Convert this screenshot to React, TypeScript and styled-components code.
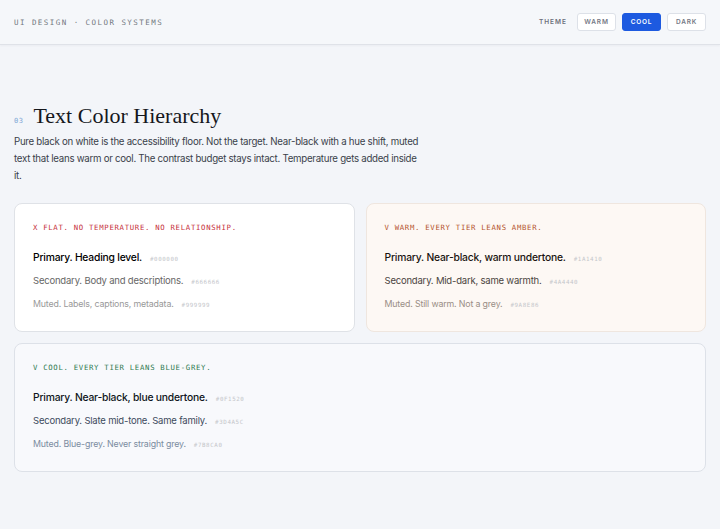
import React from "react";
import styled, { createGlobalStyle } from "styled-components";

const GlobalStyle = createGlobalStyle`
  html, body {
    margin: 0;
    padding: 0;
    background: #f3f5f9;
  }
  body {
    font-family: Inter, "Noto Sans", sans-serif;
    -webkit-font-smoothing: antialiased;
  }
`;

const Page = styled.div`
  min-height: 529px;
  background: #f3f5f9;
`;

const Header = styled.header`
  height: 45px;
  box-sizing: border-box;
  padding: 0 14px;
  display: flex;
  align-items: center;
  justify-content: space-between;
  background: #f5f7fa;
  border-bottom: 1px solid #dfe2e8;
  box-shadow: 0 1px 2px rgba(20, 30, 50, 0.04);
`;

const Crumb = styled.div`
  font-family: "DejaVu Sans Mono", "Liberation Mono", monospace;
  font-size: 7.5px;
  letter-spacing: 1.45px;
  color: #73777f;
  text-transform: uppercase;
`;

const ThemeSwitch = styled.div`
  display: flex;
  align-items: center;
  gap: 6px;
`;

const ThemeLabel = styled.span`
  font-family: Inter, sans-serif;
  font-size: 6.5px;
  font-weight: 600;
  letter-spacing: 1px;
  color: #6c707a;
  margin-right: 4px;
`;

const ThemeButton = styled.button<{ $active?: boolean }>`
  width: 39px;
  height: 18px;
  padding: 0;
  border-radius: 3px;
  border: 1px solid ${(p) => (p.$active ? "#1d5ae0" : "#dde1e8")};
  background: ${(p) => (p.$active ? "#1d5ae0" : "#ffffff")};
  color: ${(p) => (p.$active ? "#ffffff" : "#747884")};
  font-family: Inter, sans-serif;
  font-size: 6.5px;
  font-weight: 600;
  letter-spacing: 0.8px;
  cursor: pointer;
`;

const Main = styled.main`
  padding: 57px 14px 40px;
`;

const TitleRow = styled.div`
  display: flex;
  align-items: baseline;
  gap: 10px;
`;

const SectionNum = styled.span`
  font-family: "DejaVu Sans Mono", monospace;
  font-size: 7px;
  letter-spacing: 0.5px;
  color: #7fa7d6;
`;

const Title = styled.h1`
  margin: 0;
  font-family: "Liberation Serif", "DejaVu Serif", serif;
  font-weight: 400;
  font-size: 22px;
  line-height: 28px;
  color: #15171c;
`;

const Lead = styled.p`
  margin: 3px 0 0;
  width: 408px;
  font-size: 9.7px;
  letter-spacing: -0.28px;
  line-height: 17px;
  color: #3a3f4a;
`;

const Grid = styled.div`
  margin-top: 19px;
  display: grid;
  grid-template-columns: 1fr 1fr;
  gap: 11px 11px;
`;

type Tone = "flat" | "warm" | "cool";

const tones = {
  flat: { bg: "#ffffff", border: "#dfe2e7", label: "#c62f3b" },
  warm: { bg: "#fdf8f4", border: "#efe6df", label: "#b4532c" },
  cool: { bg: "#f8f9fc", border: "#dde1e8", label: "#2f7a50" },
};

const Card = styled.div<{ $tone: Tone; $wide?: boolean }>`
  grid-column: ${(p) => (p.$wide ? "1 / span 2" : "auto")};
  height: 129px;
  box-sizing: border-box;
  padding: 19px 18px 0;
  border-radius: 8px;
  background: ${(p) => tones[p.$tone].bg};
  border: 1px solid ${(p) => tones[p.$tone].border};
  display: flex;
  flex-direction: column;
`;

const CardLabel = styled.div<{ $tone: Tone }>`
  font-family: "DejaVu Sans Mono", "Liberation Mono", monospace;
  font-size: 7.3px;
  line-height: 10px;
  letter-spacing: 0.7px;
  text-transform: uppercase;
  color: ${(p) => tones[p.$tone].label};
  margin-bottom: 17px;
`;

const Rows = styled.div`
  display: flex;
  flex-direction: column;
  gap: 9.5px;
`;

const Row = styled.div`
  display: flex;
  align-items: baseline;
  gap: 8px;
  height: 14px;
  line-height: 14px;
`;

const levels = [
  { size: 10.3, weight: 500, spacing: -0.2 },
  { size: 9.5, weight: 400, spacing: -0.2 },
  { size: 8.8, weight: 400, spacing: -0.15 },
];

const Sample = styled.span<{ $level: number; $color: string }>`
  color: ${(p) => p.$color};
  font-size: ${(p) => levels[p.$level].size}px;
  font-weight: ${(p) => levels[p.$level].weight};
  letter-spacing: ${(p) => levels[p.$level].spacing}px;
`;

const Hex = styled.span`
  font-family: "DejaVu Sans Mono", monospace;
  font-size: 5.8px;
  letter-spacing: 0.6px;
  color: #c4c6ca;
`;

type Line = { text: string; hex: string };

const cards: { tone: Tone; label: string; wide?: boolean; lines: Line[] }[] = [
  {
    tone: "flat",
    label: "X Flat. No temperature. No relationship.",
    lines: [
      { text: "Primary. Heading level.", hex: "#000000" },
      { text: "Secondary. Body and descriptions.", hex: "#666666" },
      { text: "Muted. Labels, captions, metadata.", hex: "#999999" },
    ],
  },
  {
    tone: "warm",
    label: "V Warm. Every tier leans amber.",
    lines: [
      { text: "Primary. Near-black, warm undertone.", hex: "#1A1410" },
      { text: "Secondary. Mid-dark, same warmth.", hex: "#4A4440" },
      { text: "Muted. Still warm. Not a grey.", hex: "#9A8E86" },
    ],
  },
  {
    tone: "cool",
    wide: true,
    label: "V Cool. Every tier leans blue-grey.",
    lines: [
      { text: "Primary. Near-black, blue undertone.", hex: "#0F1520" },
      { text: "Secondary. Slate mid-tone. Same family.", hex: "#3D4A5C" },
      { text: "Muted. Blue-grey. Never straight grey.", hex: "#7B8CA0" },
    ],
  },
];

export default function App() {
  return (
    <Page>
      <GlobalStyle />
      <Header>
        <Crumb>UI Design · Color Systems</Crumb>
        <ThemeSwitch>
          <ThemeLabel>THEME</ThemeLabel>
          <ThemeButton>WARM</ThemeButton>
          <ThemeButton $active>COOL</ThemeButton>
          <ThemeButton>DARK</ThemeButton>
        </ThemeSwitch>
      </Header>
      <Main>
        <TitleRow>
          <SectionNum>03</SectionNum>
          <Title>Text Color Hierarchy</Title>
        </TitleRow>
        <Lead>
          Pure black on white is the accessibility floor. Not the target. Near-black with a hue
          shift, muted text that leans warm or cool. The contrast budget stays intact. Temperature
          gets added inside it.
        </Lead>
        <Grid>
          {cards.map((c) => (
            <Card key={c.tone} $tone={c.tone} $wide={c.wide}>
              <CardLabel $tone={c.tone}>{c.label}</CardLabel>
              <Rows>
                {c.lines.map((l, i) => (
                  <Row key={l.hex}>
                    <Sample $level={i} $color={l.hex}>
                      {l.text}
                    </Sample>
                    <Hex>{l.hex}</Hex>
                  </Row>
                ))}
              </Rows>
            </Card>
          ))}
        </Grid>
      </Main>
    </Page>
  );
}
